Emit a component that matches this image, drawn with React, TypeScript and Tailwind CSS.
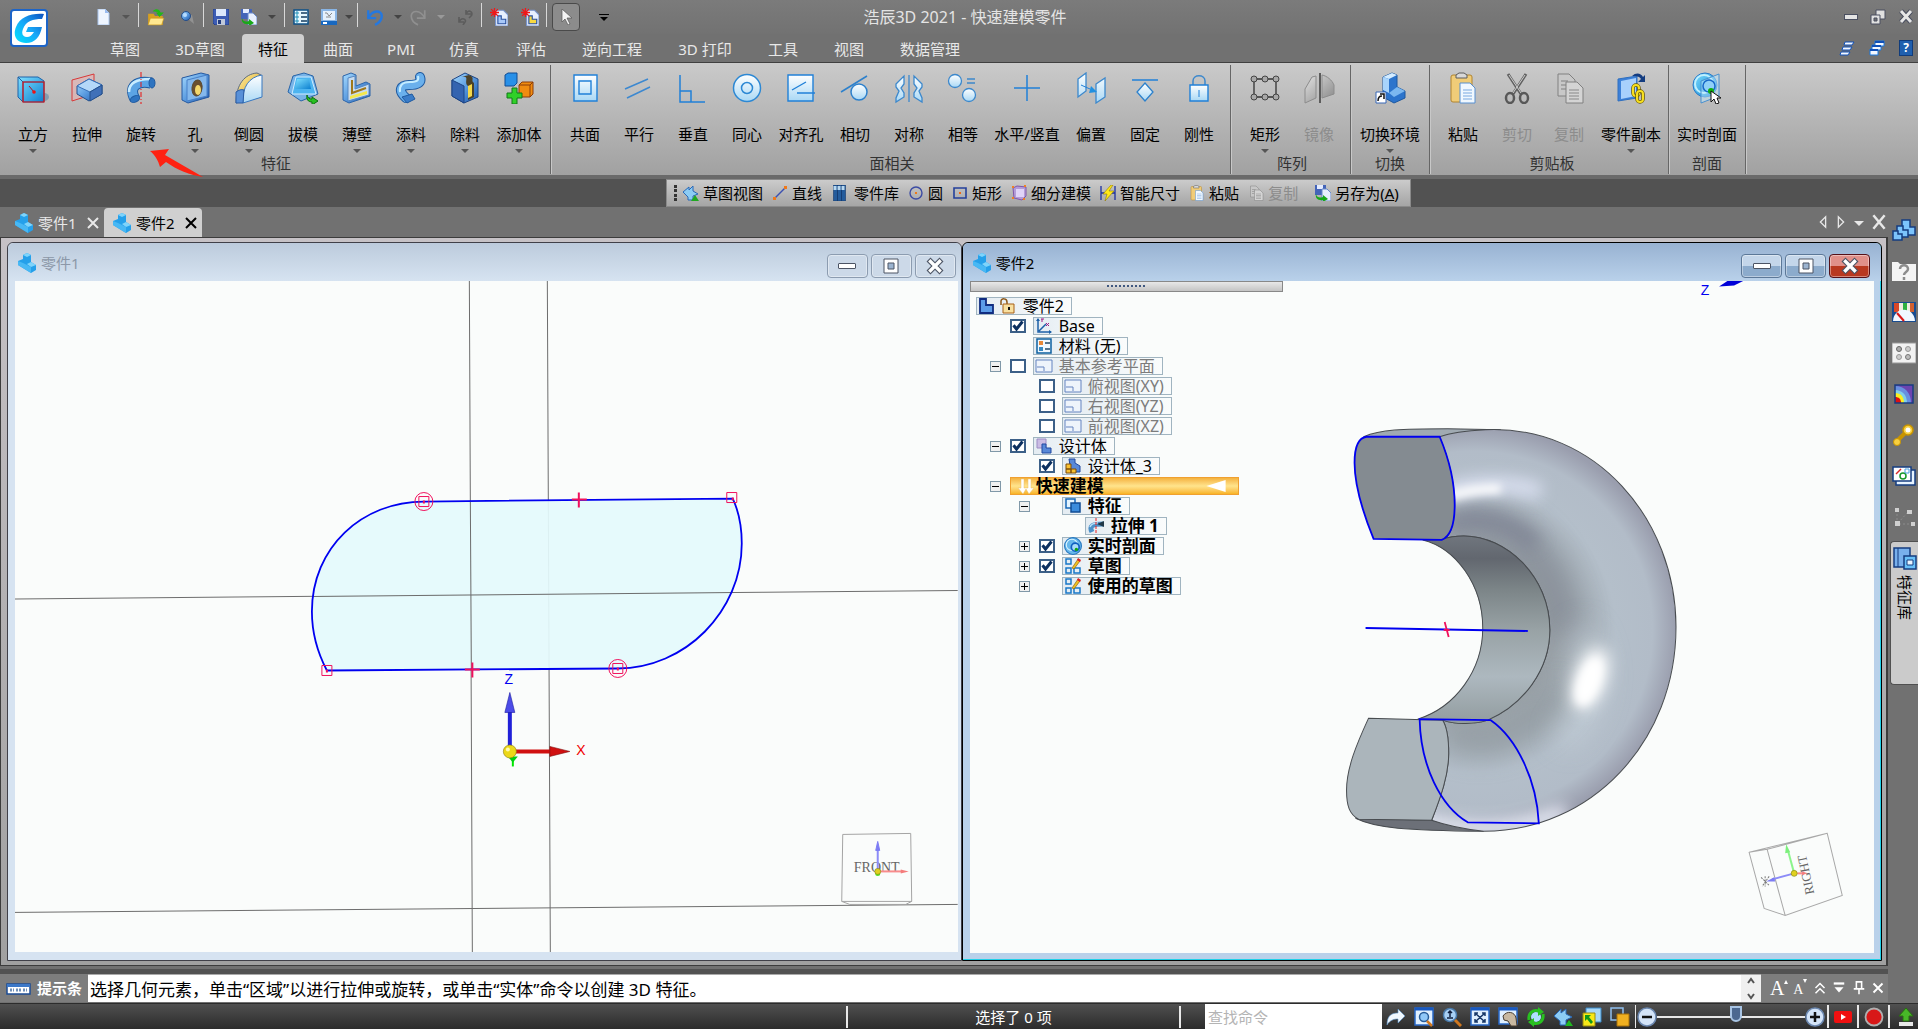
import { useState } from "react";
import type { ReactNode } from "react";

type IconProps = { className?: string; box?: number; children: ReactNode };

const Svg = ({ className = "w-4 h-4", box = 16, children }: IconProps) => (
    <svg className={`shrink-0 ${className}`} viewBox={`0 0 ${box} ${box}`} fill="none" aria-hidden="true">
        {children}
    </svg>
);

const Big = ({ children }: { children: ReactNode }) => (
    <Svg className="w-8 h-8" box={32}>{children}</Svg>
);

// Gradients shared by all icons
const Gradients = () => (
    <svg className="absolute w-0 h-0" aria-hidden="true">
        <defs>
            <linearGradient id="blue" x1="0" y1="0" x2="1" y2="1">
                <stop offset="0" stopColor="#a8dcff" />
                <stop offset="0.5" stopColor="#5a9be0" />
                <stop offset="1" stopColor="#1c54a8" />
            </linearGradient>
            <linearGradient id="cyan" x1="0" y1="0" x2="1" y2="1">
                <stop offset="0" stopColor="#7fe0ff" />
                <stop offset="1" stopColor="#0b7fd0" />
            </linearGradient>
            <linearGradient id="pale" x1="0" y1="0" x2="0" y2="1">
                <stop offset="0" stopColor="#ffffff" />
                <stop offset="1" stopColor="#a9d8f5" />
            </linearGradient>
            <linearGradient id="gold" x1="0" y1="0" x2="1" y2="1">
                <stop offset="0" stopColor="#fff3a8" />
                <stop offset="1" stopColor="#d99a10" />
            </linearGradient>
            <linearGradient id="gray" x1="0" y1="0" x2="1" y2="1">
                <stop offset="0" stopColor="#e2e2e2" />
                <stop offset="1" stopColor="#858585" />
            </linearGradient>
            <linearGradient id="logo" x1="0" y1="1" x2="1" y2="0">
                <stop offset="0" stopColor="#00e4ff" />
                <stop offset="0.5" stopColor="#18a8f8" />
                <stop offset="1" stopColor="#0c50c0" />
            </linearGradient>
        </defs>
    </svg>
);

/* ---------- ribbon icons ---------- */

const CubeIcon = () => (
    <Big>
        <ellipse cx="27" cy="25" rx="5" ry="4" fill="#6f8fa8" opacity="0.7" />
        <path d="M1 5h20l6 4v21H6l-5-5z" fill="url(#cyan)" stroke="#1e62a8" />
        <path d="M1 5l5 5h21M6 10v20" stroke="#1e62a8" />
        <path d="M6 10h21v20H6z" stroke="#e01010" strokeWidth="1.2" />
        <path d="M12 14l5 6" stroke="#b01020" />
        <circle cx="17" cy="20" r="1.8" fill="#f01010" />
    </Big>
);

const ExtrudeIcon = () => (
    <Big>
        <path d="M1 8l22-6v20L1 29z" fill="#e8b0b0" fillOpacity="0.6" stroke="#d83838" />
        <path d="M6 14l12-7 13 6v9l-13 7-12-7z" fill="url(#blue)" stroke="#24508c" />
        <path d="M6 14l13 6 12-7-13-6z" fill="#b4d8f8" stroke="#3870b8" />
        <path d="M19 20l12-7v9l-12 7z" fill="#4070b8" stroke="#24508c" />
    </Big>
);

const RevolveIcon = () => (
    <Big>
        <path d="M10 27C3 15 12 8 26 11" stroke="#1f5aa0" strokeWidth="11" />
        <path d="M10 27C3 15 12 8 26 11" stroke="#5ca4e4" strokeWidth="9" />
        <path d="M4 20C4 12 10 7 25 7" stroke="#c8ecff" strokeWidth="2.5" />
        <ellipse cx="10" cy="27" rx="5" ry="3" transform="rotate(-25 10 27)" fill="#2f74c0" stroke="#1f5aa0" />
        <ellipse cx="27" cy="11" rx="3" ry="5" fill="#2f74c0" stroke="#1f5aa0" />
        <path d="M16 0v32" stroke="#e81010" strokeDasharray="5 2 1 2" />
    </Big>
);

const HoleIcon = () => (
    <Big>
        <path d="M3 6l19-5 8 2v22L9 31l-6-3z" fill="url(#blue)" stroke="#2458a0" />
        <path d="M8 8l20-5v21L8 29z" fill="#84b8ec" stroke="#4880c8" />
        <ellipse cx="18" cy="16" rx="5" ry="8" transform="rotate(8 18 16)" fill="#6a5030" stroke="#5a4a30" />
        <ellipse cx="19" cy="18" rx="3" ry="5" fill="#f4d86c" />
    </Big>
);

const FilletIcon = () => (
    <Big>
        <path d="M3 31C3 12 12 2 24 1l4 2v22z" fill="url(#gold)" stroke="#5a6a80" />
        <path d="M10 31C9 15 16 5 29 3v22z" fill="url(#pale)" stroke="#3878c0" />
        <path d="M3 31V20c3-2 5-3 8-2l-1 13z" fill="#5890d8" stroke="#2a5ca4" />
    </Big>
);

const DraftIcon = () => (
    <Big>
        <path d="M6 4l11-3 9 3 5 18-17 7L1 20z" fill="#78b4e8" stroke="#2864a8" />
        <path d="M9 5h15l5 17H5z" fill="#4cb4f0" stroke="#d0ecff" />
        <path d="M10 7h12l2 10H8z" fill="url(#cyan)" />
        <path d="M20 23c1 3 2 4 5 4v-2l6 4-6 4v-3c-4 0-6-3-5-7z" fill="#28c020" stroke="#0a7010" />
    </Big>
);

const ShellIcon = () => (
    <Big>
        <path d="M2 4l8-3 5 2v11l10-4 4 2v12L8 31l-6-3z" fill="url(#blue)" stroke="#2c64a8" />
        <path d="M7 6l7-2v13l14-5v11L7 29z" fill="#c8dcf0" stroke="#5888c0" />
        <path d="M11 8v13l14-5" stroke="#a07818" strokeWidth="2" />
        <path d="M9 24l17-5v3L9 27z" fill="#f4e84c" />
    </Big>
);

const SweepIcon = () => (
    <Big>
        <path d="M11 26C2 18 6 13 14 13s13-2 11-8" stroke="#1f5aa0" strokeWidth="10" strokeLinecap="round" />
        <path d="M11 26C2 18 6 13 14 13s13-2 11-8" stroke="#6ab0ec" strokeWidth="8" strokeLinecap="round" />
        <path d="M5 20c-1-6 2-10 10-10s9-2 8-6" stroke="#c4ecff" strokeWidth="2" />
        <path d="M7 25l10-3 3 5-8 4z" fill="#3a7cc8" stroke="#1f5aa0" />
    </Big>
);

const CutIcon = () => (
    <Big>
        <path d="M3 8l13-7 13 6v18l-14 6L3 24z" fill="url(#blue)" stroke="#1c4484" />
        <path d="M3 8l12 6v17L3 24z" fill="#3464b0" stroke="#1c4484" />
        <path d="M12 5c10-2 2 5 7 9v14l6-3V11c-4-3 2-5-5-8z" fill="#4c4228" />
        <path d="M19 14l4-2v12l-4 2z" fill="#f4d84c" />
    </Big>
);

const AddBodyIcon = () => (
    <Big>
        <path d="M2 3l3-2h9v10l-3 3H2z" fill="#2890e8" stroke="#104c94" />
        <path d="M16 13l3-3h11v12l-3 3H16z" fill="#f08c10" stroke="#8c3c08" />
        <path d="M16 13h11v12M27 13l3-3" stroke="#8c3c08" />
        <path d="M9 16h5v5h5v5h-5v6H9v-6H4v-5h5z" fill="#30d028" stroke="#107818" />
    </Big>
);

const CoplanarIcon = () => (
    <Big>
        <path d="M5 3h23v26H5z" fill="url(#pale)" stroke="#2080d8" strokeWidth="1.4" />
        <path d="M10 9h12v13H10z" stroke="#2080d8" strokeWidth="1.4" />
    </Big>
);

const ParallelIcon = () => (
    <Big><path d="M2 17L25 7M4 26l23-11" stroke="#3c88d0" strokeWidth="1.5" /></Big>
);

const PerpIcon = () => (
    <Big><path d="M3 3v27h25M3 19h11v11" stroke="#2080d8" strokeWidth="1.5" /></Big>
);

const ConcentricIcon = () => (
    <Big>
        <circle cx="16" cy="16" r="13.5" fill="url(#pale)" stroke="#2c88d4" strokeWidth="1.5" />
        <circle cx="16" cy="16" r="5.5" stroke="#2c88d4" strokeWidth="1.5" />
    </Big>
);

const AlignHoleIcon = () => (
    <Big>
        <path d="M3 3h25v26H3z" fill="url(#pale)" stroke="#2080d8" strokeWidth="1.4" />
        <path d="M7 18l14-8M12 21h18" stroke="#2080d8" strokeWidth="1.4" />
    </Big>
);

const TangentIcon = () => (
    <Big>
        <path d="M2 20L28 4" stroke="#2c80cc" strokeWidth="1.5" />
        <circle cx="20" cy="20" r="8" fill="url(#pale)" stroke="#2c80cc" strokeWidth="1.5" />
    </Big>
);

const SymmetricIcon = () => (
    <Big>
        <path d="M3 12l8-8v8l-3 4 3 5v4l-8 5v-4l3-7-3-4zM29 12l-8-8v8l3 4-3 5v4l8 5v-4l-3-7 3-4z" fill="url(#pale)" stroke="#3c88cc" strokeWidth="1.3" />
        <path d="M16 3v27" stroke="#3c88cc" strokeWidth="1.3" />
    </Big>
);

const EqualIcon = () => (
    <Big>
        <circle cx="8" cy="9" r="6.5" fill="url(#pale)" stroke="#3c88cc" strokeWidth="1.3" />
        <circle cx="22" cy="23" r="6.5" fill="url(#pale)" stroke="#3c88cc" strokeWidth="1.3" />
        <path d="M20 7h8M20 11h8" stroke="#3c88cc" strokeWidth="1.3" />
    </Big>
);

const HorizVertIcon = () => (
    <Big><path d="M16 3v26M3 16h26" stroke="#2080d8" strokeWidth="1.5" /></Big>
);

const OffsetIcon = () => (
    <Big>
        <path d="M3 7l8-6v18l-8 6zM21 12l9-6v19l-9 6z" fill="url(#pale)" stroke="#3c88cc" strokeWidth="1.3" />
        <path d="M6 13l9 4" stroke="#2080d8" />
        <path d="M16 14l6 6-8 1z" fill="#2090e0" />
    </Big>
);

const FixIcon = () => (
    <Big>
        <path d="M3 8h26" stroke="#2080d8" strokeWidth="1.5" />
        <path d="M16 11l8 9-8 9-8-9z" fill="url(#pale)" stroke="#2c80cc" strokeWidth="1.3" />
    </Big>
);

const LockIcon = () => (
    <Big>
        <path d="M10 13V9c0-7 12-7 12 0v4" stroke="#3c88cc" strokeWidth="1.5" />
        <path d="M7 13h18v16H7z" fill="url(#pale)" stroke="#2080d8" strokeWidth="1.4" />
        <path d="M16 18v7" stroke="#2080d8" />
    </Big>
);

const PatternIcon = () => (
    <Big>
        <path d="M5 7h22v18H5z" stroke="#333" strokeWidth="1.3" />
        {[5, 16, 27].map((x) => [7, 25].map((y) => (
            <circle key={`${x}-${y}`} cx={x} cy={y} r="3" fill="#a8a8a8" stroke="#444" />
        )))}
    </Big>
);

const MirrorIcon = () => (
    <Big>
        <path d="M2 17L9 5l4-1v22L2 31zM19 3c5 1 10 5 12 10v9l-12 4z" fill="url(#gray)" stroke="#8c8c8c" />
        <path d="M17 1v30" stroke="#5c5c5c" strokeWidth="2" />
    </Big>
);

const SwitchEnvIcon = () => (
    <Big>
        <path d="M9 5l9-4 5 2v12l8 4v7l-11 5-11-6z" fill="#2c74cc" stroke="#1c58a0" />
        <path d="M9 5l9-4 5 2-8 4z" fill="#d4ecff" />
        <path d="M9 5l6 2v14l-6-3z" fill="#a8d4fc" />
        <path d="M15 21l8-6 8 4-11 6z" fill="#7cb8f0" />
        <path d="M2 20h10v11H2z" fill="#fff" stroke="#3868b8" />
        <path d="M4 29c0-4 2-5 4-5M6 22h4v5" stroke="#111" strokeWidth="1.5" />
    </Big>
);

const PasteIcon = ({ className = "w-8 h-8" }: { className?: string }) => (
    <Svg className={className} box={32}>
        <rect x="4" y="3" width="21" height="27" rx="2" fill="#f0cc78" stroke="#b08430" />
        <path d="M9 6V3l3-2h5l3 2v3z" fill="#d8d8d8" stroke="#5c5c5c" />
        <path d="M13 11h10l5 5v15H13z" fill="#f0f8ff" stroke="#5890d0" />
        <path d="M16 18h9M16 21h9M16 24h9M16 27h9" stroke="#78a8e0" />
    </Svg>
);

const ScissorsIcon = () => (
    <Big>
        <path d="M7 2l13 20M25 2L12 22" stroke="#606060" strokeWidth="3" />
        <path d="M8 3l12 18M24 3L12 21" stroke="#d0d0d0" />
        <ellipse cx="9" cy="26" rx="4" ry="5" stroke="#585858" strokeWidth="2.5" />
        <ellipse cx="23" cy="26" rx="4" ry="5" stroke="#585858" strokeWidth="2.5" />
    </Big>
);

const CopyIcon = ({ className = "w-8 h-8" }: { className?: string }) => (
    <Svg className={className} box={32}>
        <path d="M5 2h11l6 6v16H5z" fill="#c8c8c8" stroke="#808080" />
        <path d="M8 9h7M8 13h7M8 17h5" stroke="#808080" />
        <path d="M13 10h11l6 6v15H13z" fill="#d4d4d4" stroke="#808080" />
        <path d="M16 18h10M16 21h10M16 24h10M16 27h10" stroke="#888" />
    </Svg>
);

const PartCopyIcon = () => (
    <Big>
        <path d="M3 7l19-3v22L3 29z" fill="#3c80d8" stroke="#3070c0" />
        <path d="M6 9l15-3v18L6 27z" fill="#a8d0fc" />
        <path d="M17 4c4-4 9-3 11 1l2-2v7h-7l3-3c-2-3-5-3-9-3z" fill="#143c80" />
        <rect x="18" y="13" width="6" height="11" rx="3" stroke="#685800" strokeWidth="3.5" />
        <rect x="18" y="13" width="6" height="11" rx="3" stroke="#f8e020" strokeWidth="2" />
        <rect x="22" y="19" width="6" height="11" rx="3" stroke="#685800" strokeWidth="3.5" />
        <rect x="22" y="19" width="6" height="11" rx="3" stroke="#f8e020" strokeWidth="2" />
    </Big>
);

const SectionIcon = () => (
    <Big>
        <circle cx="14" cy="13" r="12" fill="url(#cyan)" stroke="#2878c8" />
        <circle cx="13" cy="12" r="9" stroke="#c0f0ff" strokeWidth="2" />
        <path d="M10 9l18-7v22l-18 7z" fill="#c0e8fc" fillOpacity="0.5" stroke="#4890d0" />
        <circle cx="18" cy="14" r="6" fill="#90d0f8" stroke="#1868c8" strokeWidth="1.5" />
        <circle cx="20" cy="19" r="3" fill="#10b010" />
        <path d="M20 19v11l3-3 2 5 3-1-2-5h4z" fill="#fff" stroke="#111" />
    </Big>
);

/* ---------- small icons ---------- */

const PartIcon = () => (
    <Svg className="w-5 h-5" box={20}>
        <path d="M1 8l5-2V2l4-2 4 2v7l5 3v5l-5 3L1 12z" fill="#25a0ea" />
        <path d="M6 2l4-2 4 2-4 2zM14 9l5 3-5 2-4-3z" fill="#7fd4fb" />
        <path d="M1 8l5 2 8 4v6L1 12z" fill="#48b8f4" />
    </Svg>
);

const DocIcon = () => <Svg><path d="M3 0h7l4 4v12H3z" fill="#eef5ff" stroke="#a8c4ec" /><path d="M10 0v4h4" fill="#9abcf0" /></Svg>;
const OpenIcon = () => <Svg className="w-[18px] h-[18px]"><path d="M1 5h5l1 2h7v8H1z" fill="#d8a020" /><path d="M3 9h12l-2 6H1z" fill="#ffe890" stroke="#c89820" strokeWidth="0.6" /><path d="M5 3c3-3 6-2 7 1h3l-4 4-3-4h2C9 3 7 3 5 3z" fill="#20b818" /></Svg>;
const PinViewIcon = () => <Svg><path d="M7 8l8 7-2-9z" fill="#9a9a9a" opacity="0.8" /><circle cx="7" cy="7" r="4.5" fill="url(#blue)" stroke="#244c88" /><circle cx="6" cy="6" r="2" fill="#b8dcff" /></Svg>;
const SaveIcon = () => <Svg><path d="M0 0h16v16H2l-2-2z" fill="#3c5cb4" stroke="#24408c" /><path d="M3 0h10v7H3z" fill="#dce8fc" /><path d="M4 10h8v6H4z" fill="#c0c8d8" /><path d="M5 11h3v4H5z" fill="#223c80" /></Svg>;
const SaveAsIcon = () => <Svg><path d="M0 0h11v10H0z" fill="#4464b8" /><path d="M2 0h6v4H2z" fill="#e4ecff" /><path d="M7 4h5l4 4v8H7z" fill="#e8f0ff" stroke="#6888c8" /><path d="M1 9c1 4 4 4 7 3v-2l5 4-5 3v-2c-5 1-8-2-7-6z" fill="#18a818" /></Svg>;
const ListIcon = () => <Svg><path d="M1 1h14v14H1z" fill="#e8f8ff" stroke="#0c5088" strokeWidth="1.5" /><path d="M3 3h2v2H3zM3 7h2v2H3zM3 11h2v2H3z" stroke="#2090b8" /><path d="M8 4h6M8 8h6M8 12h6" stroke="#143c60" strokeWidth="1.5" /></Svg>;
const ImageSaveIcon = () => <Svg><path d="M1 1h14v11H1z" fill="#e4f0fc" stroke="#88b4e4" strokeWidth="2" /><path d="M4 4h2l2 3 3-3M5 8h5" stroke="#888" /><path d="M0 12h16v4H0z" fill="#1868c0" /><path d="M2 13h4v2H2z" fill="#fff" /></Svg>;
const UndoIcon = () => <Svg className="w-[18px] h-[18px]"><path d="M2 2v7h7" stroke="#2478e0" strokeWidth="2" /><path d="M2 9c4-8 12-7 12-2 0 3-2 6-6 8" stroke="#2478e0" strokeWidth="2.2" /></Svg>;
const RedoIcon = () => <Svg className="w-[18px] h-[18px]"><path d="M14 2v7H7" stroke="#909090" strokeWidth="1.5" /><path d="M14 9C10 1 2 2 2 7c0 3 2 6 6 8" stroke="#909090" strokeWidth="1.5" /></Svg>;
const RepeatIcon = () => <Svg><path d="M8 1v4h5M8 5c3-6 8-1 5 2l-2 2M1 8v5h5M1 13c3-6 8-2 6 0l-2 3" stroke="#5c5c5c" strokeWidth="1.6" /></Svg>;
const NewPartIcon = ({ color }: { color: string }) => <Svg className="w-[18px] h-[18px]"><path d="M5 2h7l4 4v10H5z" fill="#e8f0ff" stroke="#7894cc" /><path d="M7 7h3v3h4v4H7z" fill={color} stroke="#2850a0" /><path d="M4 0v8M0 4h8M1 1l6 6M7 1L1 7" stroke="#f01818" strokeWidth="1.2" /></Svg>;
const CursorIcon = () => <Svg><path d="M4 0v13l3-3 3 6 2-1-3-6h5z" fill="#f4f4f4" stroke="#555" strokeWidth="0.7" /></Svg>;
const SketchViewIcon = () => <Svg><path d="M0 7l6-5v3l4-4v5l5 3-5 2v4H5v-3z" fill="#8cccf4" stroke="#2868b8" /><path d="M12 10l4 6H8z" fill="#20a820" /></Svg>;
const LineIcon = () => <Svg><path d="M3 13L13 3" stroke="#3c50b0" strokeWidth="1.5" /><path d="M1 12h3v3H1zM12 1h3v3h-3z" fill="#f07818" /></Svg>;
const LibraryIcon = () => <Svg className="w-[19px] h-4"><path d="M1 0h4v16H1zM5 0h4v16H5zM9 0h4v16H9z" fill="#245c9c" stroke="#12386c" strokeWidth="0.6" /><path d="M1 1h3v4H1zM5 1h3v4H5zM9 1h3v4H9z" fill="#b8d8f0" /></Svg>;
const CircleIcon = () => <Svg><circle cx="8" cy="8" r="6" stroke="#3c4ca4" strokeWidth="1.4" /><path d="M7 7h2v2H7z" fill="#f07818" /></Svg>;
const RectIcon = () => <Svg><path d="M2 3h12v10H2z" stroke="#24409c" strokeWidth="1.6" /><path d="M7 7h2v2H7z" fill="#f06818" /></Svg>;
const SubdivIcon = () => <Svg><path d="M2 3l4-2 9 1v9l-4 4-8-2z" fill="#b49cd8" stroke="#8058a8" /><path d="M5 4h8v8H5z" fill="#e0d4f8" /><path d="M1 1h2v2H1zM13 0h2v2h-2zM1 12h2v2H1zM12 13h2v2h-2z" fill="#f08020" /></Svg>;
const SmartDimIcon = () => <Svg><path d="M1 1v14M15 1v14M1 8h14" stroke="#1c30a0" strokeWidth="1.3" /><path d="M11 0L3 9h4l-2 7 9-10H9l4-6z" fill="#ffe818" stroke="#907800" strokeWidth="0.6" /></Svg>;

/* ---------- data ---------- */

const tabs = [
    { name: "草图", width: "w-[66px]" },
    { name: "3D草图", width: "w-[84px]" },
    { name: "特征", width: "w-[62px]" },
    { name: "曲面", width: "w-[68px]" },
    { name: "PMI", width: "w-[58px]" },
    { name: "仿真", width: "w-[68px]" },
    { name: "评估", width: "w-[66px]" },
    { name: "逆向工程", width: "w-[96px]" },
    { name: "3D 打印", width: "w-[90px]" },
    { name: "工具", width: "w-[66px]" },
    { name: "视图", width: "w-[66px]" },
    { name: "数据管理", width: "w-[96px]" },
];

type Command = { label: string; icon: ReactNode; menu?: boolean; disabled?: boolean; width?: string };
type Group = { title: string; pad: string; commands: Command[] };

const groups: Group[] = [
    {
        title: "特征",
        pad: "pl-[6px] pr-1",
        commands: [
            { label: "立方", icon: <CubeIcon />, menu: true },
            { label: "拉伸", icon: <ExtrudeIcon /> },
            { label: "旋转", icon: <RevolveIcon /> },
            { label: "孔", icon: <HoleIcon />, menu: true },
            { label: "倒圆", icon: <FilletIcon />, menu: true },
            { label: "拔模", icon: <DraftIcon /> },
            { label: "薄壁", icon: <ShellIcon />, menu: true },
            { label: "添料", icon: <SweepIcon />, menu: true },
            { label: "除料", icon: <CutIcon />, menu: true },
            { label: "添加体", icon: <AddBodyIcon />, menu: true },
        ],
    },
    {
        title: "面相关",
        pad: "pl-[7px] pr-1",
        commands: [
            { label: "共面", icon: <CoplanarIcon /> },
            { label: "平行", icon: <ParallelIcon /> },
            { label: "垂直", icon: <PerpIcon /> },
            { label: "同心", icon: <ConcentricIcon /> },
            { label: "对齐孔", icon: <AlignHoleIcon /> },
            { label: "相切", icon: <TangentIcon /> },
            { label: "对称", icon: <SymmetricIcon /> },
            { label: "相等", icon: <EqualIcon /> },
            { label: "水平/竖直", icon: <HorizVertIcon />, width: "w-[74px]" },
            { label: "偏置", icon: <OffsetIcon /> },
            { label: "固定", icon: <FixIcon /> },
            { label: "刚性", icon: <LockIcon /> },
        ],
    },
    {
        title: "阵列",
        pad: "pl-[7px] pr-1",
        commands: [
            { label: "矩形", icon: <PatternIcon />, menu: true },
            { label: "镜像", icon: <MirrorIcon />, disabled: true },
        ],
    },
    { title: "切换", pad: "px-[2px]", commands: [{ label: "切换环境", icon: <SwitchEnvIcon />, menu: true, width: "w-[74px]" }] },
    {
        title: "剪贴板",
        pad: "pl-[6px]",
        commands: [
            { label: "粘贴", icon: <PasteIcon /> },
            { label: "剪切", icon: <ScissorsIcon />, disabled: true },
            { label: "复制", icon: <CopyIcon />, disabled: true, width: "w-[50px]" },
            { label: "零件副本", icon: <PartCopyIcon />, menu: true, width: "w-[74px]" },
        ],
    },
    { title: "剖面", pad: "px-px", commands: [{ label: "实时剖面", icon: <SectionIcon />, width: "w-[74px]" }] },
];

const quickCommands = [
    { label: "草图视图", icon: <SketchViewIcon /> },
    { label: "直线", icon: <LineIcon /> },
    { label: "零件库", icon: <LibraryIcon /> },
    { label: "圆", icon: <CircleIcon /> },
    { label: "矩形", icon: <RectIcon /> },
    { label: "细分建模", icon: <SubdivIcon /> },
    { label: "智能尺寸", icon: <SmartDimIcon /> },
    { label: "粘贴", icon: <PasteIcon className="w-4 h-4" /> },
    { label: "复制", icon: <CopyIcon className="w-4 h-4" />, disabled: true },
];

/* ---------- header ---------- */

const Caret = ({ className = "border-t-[#333]" }: { className?: string }) => (
    <span className={`inline-block w-0 h-0 border-x-4 border-x-transparent border-t-4 ${className}`} />
);

const QatButton = ({ label, width, children }: { label: string; width: string; children: ReactNode }) => (
    <button aria-label={label} className={`h-7 flex items-center justify-center ${width}`}>{children}</button>
);

const QatSep = () => <span className="w-px h-6 bg-[#d8d8d8] mx-px self-start mt-[3px]" />;

function TitleBar() {
    return (
        <div className="relative h-[34px] flex items-center pl-[91px] bg-gradient-to-b from-[#7b7b7b] to-[#727272]">
            <QatButton label="新建" width="w-6"><DocIcon /></QatButton>
            <QatButton label="新建选项" width="w-[22px]"><Caret className="border-t-[#555]" /></QatButton>
            <QatSep />
            <QatButton label="打开" width="w-[31px]"><OpenIcon /></QatButton>
            <QatButton label="预览" width="w-[31px]"><PinViewIcon /></QatButton>
            <QatSep />
            <QatButton label="保存" width="w-8"><SaveIcon /></QatButton>
            <QatButton label="另存为" width="w-6"><SaveAsIcon /></QatButton>
            <QatButton label="保存选项" width="w-[22px]"><Caret className="border-t-[#444]" /></QatButton>
            <QatSep />
            <QatButton label="属性" width="w-[30px]"><ListIcon /></QatButton>
            <QatButton label="图像" width="w-[26px]"><ImageSaveIcon /></QatButton>
            <QatButton label="图像选项" width="w-[14px]"><Caret className="border-t-[#444]" /></QatButton>
            <QatSep />
            <QatButton label="撤销" width="w-[31px]"><UndoIcon /></QatButton>
            <QatButton label="撤销选项" width="w-4"><Caret className="border-t-[#444]" /></QatButton>
            <QatButton label="重做" width="w-6"><RedoIcon /></QatButton>
            <QatButton label="重做选项" width="w-[22px]"><Caret className="border-t-[#999]" /></QatButton>
            <QatButton label="重复" width="w-7"><RepeatIcon /></QatButton>
            <QatSep />
            <QatButton label="新建零件" width="w-[31px]"><NewPartIcon color="#a8c8f8" /></QatButton>
            <QatButton label="新建装配" width="w-[31px]"><NewPartIcon color="#f8d840" /></QatButton>
            <QatSep />
            <button aria-label="选择" className="w-[28px] h-[28px] ml-1 flex items-center justify-center rounded-sm border border-[#4a4a4a] bg-[#8c8c8c]">
                <CursorIcon />
            </button>
            <button aria-label="自定义" className="ml-[18px] w-3 flex flex-col items-center gap-[2px]">
                <span className="w-[10px] h-px bg-black" />
                <Caret className="border-t-black" />
            </button>
            <h1 className="absolute inset-x-0 left-3 text-center text-base leading-[34px] text-[#e4e4e4] pointer-events-none">
                浩辰3D 2021 - 快速建模零件
            </h1>
            <div className="ml-auto flex items-center gap-3 pr-1">
                <button aria-label="最小化" className="w-[14px] h-4 flex items-center"><span className="w-[14px] h-[6px] bg-[#e4e4e4] border border-[#4a4f60]" /></button>
                <button aria-label="还原">
                    <Svg><path d="M6 1h9v9H6z" fill="#e0e0e0" stroke="#4a4f60" /><path d="M1 6h9v9H1z" fill="#e0e0e0" stroke="#4a4f60" /><path d="M4 9h3v3H4z" fill="#727272" stroke="#4a4f60" /></Svg>
                </button>
                <button aria-label="关闭">
                    <Svg><path d="M3 2l10 11M13 2L3 13" stroke="#4a4f60" strokeWidth="5" /><path d="M3 2l10 11M13 2L3 13" stroke="#e6e6e6" strokeWidth="3" /></Svg>
                </button>
            </div>
        </div>
    );
}

function TabBar() {
    const [active, setActive] = useState("特征");
    return (
        <nav className="h-7 flex pl-[92px] bg-[#717171]">
            {tabs.map((t) => (
                <button
                    key={t.name}
                    onClick={() => setActive(t.name)}
                    className={`h-[29px] text-[15px] leading-7 whitespace-nowrap ${t.width} ${active === t.name ? "relative z-10 rounded-t bg-[#cfcfcf] text-black" : "text-[#e8e8e8]"}`}
                >
                    {t.name}
                </button>
            ))}
            <div className="ml-auto flex items-center gap-[14px] pr-[5px]">
                <button aria-label="层叠">
                    <Svg><path d="M6 2h9l-2 3H5zM4 7h9l-2 3H3zM2 12h9l-2 3H1z" fill="#f4f8ff" stroke="#1050b8" /></Svg>
                </button>
                <button aria-label="平铺">
                    <Svg><path d="M6 1h9v5h-3v4h-3v5H1V9h2V5h3z" fill="#f4f8ff" stroke="#1878e0" /><path d="M6 2h9M3 6h9M1 10h8" stroke="#1050b8" strokeWidth="2" /></Svg>
                </button>
                <button aria-label="帮助" className="w-[14px] h-4 bg-[#1f5fae] border border-[#103c7c] text-white text-xs leading-[14px] font-bold">?</button>
            </div>
        </nav>
    );
}

function RibbonCommand({ label, icon, menu, disabled, width = "w-[54px]" }: Command) {
    return (
        <button
            disabled={disabled}
            className={`h-[92px] pt-[9px] flex flex-col items-center ${width} ${disabled ? "text-[#8c8c8c]" : "text-black"}`}
        >
            {icon}
            <span className="mt-5 text-[15px] leading-5 whitespace-nowrap">{label}</span>
            {menu && <Caret className="mt-[5px] border-t-[#555]" />}
        </button>
    );
}

function Ribbon() {
    return (
        <div className="relative h-[117px] flex border-t border-[#404040] border-b-4 border-b-[#6a6a6a] bg-gradient-to-b from-[#cacaca] to-[#a1a1a1]">
            {groups.map((g) => (
                <section key={g.title} aria-label={g.title} className={`h-[109px] mt-[2px] border-r border-[#666] shadow-[1px_0_0_#c8c8c8] ${g.pad}`}>
                    <div className="-mt-[2px] flex">
                        {g.commands.map((c) => <RibbonCommand key={c.label} {...c} />)}
                    </div>
                    <p className="text-center text-[15px] leading-4 text-[#333]">{g.title}</p>
                </section>
            ))}
            {/* Pointer towards the revolve command */}
            <svg className="absolute left-[148px] top-[84px] w-14 h-8 pointer-events-none" viewBox="0 0 56 32">
                <path d="M2 4l19-2-4 6 38 22c-13-2-26-7-37-15l-6 5c-2-7-5-12-10-16z" fill="#ff2212" />
            </svg>
        </div>
    );
}

function QuickBar() {
    return (
        <div className="h-[28px] flex bg-[#525252] pl-[666px]">
            <div role="toolbar" className="h-[28px] flex items-center pl-[7px] pr-[11px] gap-[9px] border border-[#8a8a8a] bg-gradient-to-b from-[#cbcbcb] to-[#a5a5a5] text-[15px] leading-5 whitespace-nowrap">
                <span className="w-[3px] h-4 -mr-[3px] flex flex-col justify-between">
                    {[0, 1, 2, 3].map((i) => <span key={i} className="w-[3px] h-[3px] bg-[#333]" />)}
                </span>
                {quickCommands.map((c) => (
                    <button key={c.label} disabled={c.disabled} className={`flex items-center gap-1 ${c.disabled ? "text-[#8c8c8c]" : "text-black"}`}>
                        {c.icon}
                        {c.label}
                    </button>
                ))}
                <button className="ml-2 flex items-center gap-1">
                    <SaveAsIcon />
                    <span>另存为(<u>A</u>)</span>
                </button>
            </div>
        </div>
    );
}

function DocTabs() {
    const [active, setActive] = useState("零件2");
    return (
        <div className="h-[30px] flex items-end pl-[6px] bg-[#717171]">
            {["零件1", "零件2"].map((name) => {
                const on = active === name;
                return (
                    <div key={name} className={`h-[29px] w-[98px] pl-2 flex items-center rounded-t ${on ? "bg-[#d0d0d0] text-black" : "text-[#e8e8e8]"}`}>
                        <button onClick={() => setActive(name)} className="flex items-center gap-1 text-[15px] leading-5">
                            <PartIcon />
                            {name}
                        </button>
                        <button aria-label={`关闭 ${name}`} className="ml-2">
                            <Svg className="w-4 h-4"><path d="M3 3l10 10M13 3L3 13" stroke="currentColor" strokeWidth="2" /></Svg>
                        </button>
                    </div>
                );
            })}
            <div className="ml-auto h-full flex items-center gap-1 text-[#e8e8e8]">
                <button aria-label="上一个"><Svg className="w-[14px] h-[14px]"><path d="M11 2v12L5 8z" stroke="currentColor" strokeWidth="1.5" /></Svg></button>
                <button aria-label="下一个"><Svg className="w-[14px] h-[14px]"><path d="M5 2v12l6-6z" stroke="currentColor" strokeWidth="1.5" /></Svg></button>
                <button aria-label="窗口列表" className="w-[14px]"><Caret className="border-t-[#e8e8e8] border-x-[5px]! border-t-[5px]! align-middle" /></button>
                <button aria-label="关闭窗口"><Svg className="w-[18px] h-[18px]"><path d="M3 2l10 12M13 2L3 14" stroke="currentColor" strokeWidth="2.2" /></Svg></button>
            </div>
        </div>
    );
}

/* ---------- drawing windows ---------- */

function WindowButtons({ active }: { active?: boolean }) {
    const tone = active ? "border-[#5c7898] bg-gradient-to-b from-[#c4d6ea] from-50% to-[#8cabcc] to-50%" : "border-[#8c9cb0] bg-[#ccd9e8]";
    const close = active ? "border-[#551018] bg-gradient-to-b from-[#e0908a] from-50% to-[#b83820] to-50%" : "border-[#8c9cb0] bg-[#ccd9e8]";
    return (
        <div className="ml-auto flex gap-[3px] self-end mb-[3px]">
            <button aria-label="最小化" className={`w-[41px] h-6 flex items-center justify-center rounded-sm border shadow-[inset_0_0_0_1px_#ffffff66] ${tone}`}>
                <span className="w-[18px] h-[6px] rounded-[1px] bg-white border border-[#4c5464]" />
            </button>
            <button aria-label="最大化" className={`w-[41px] h-6 flex items-center justify-center rounded-sm border shadow-[inset_0_0_0_1px_#ffffff66] ${tone}`}>
                <Svg><path d="M1 1h14v14H1z" fill="#fff" stroke="#4c5464" /><path d="M5 5h6v6H5z" fill="#9cb4d0" stroke="#4c5464" /></Svg>
            </button>
            <button aria-label="关闭" className={`w-[41px] h-6 flex items-center justify-center rounded-sm border shadow-[inset_0_0_0_1px_#ffffff66] ${close}`}>
                <Svg className="w-[18px] h-[18px]"><path d="M4 4l8 8M12 4L4 12" stroke="#4c5464" strokeWidth="5" strokeLinecap="square" /><path d="M4 4l8 8M12 4L4 12" stroke="#fff" strokeWidth="3" strokeLinecap="square" /></Svg>
            </button>
        </div>
    );
}

const PROFILE = "M424 502C362 502 312 548 312 612C312 634 317 652 327 671L618 669C685 669 742 612 742 544C742 528 739 512 733 499Z";

const SketchDrawing = () => (
    <svg className="absolute inset-0 w-full h-full" viewBox="15 281 943 672" preserveAspectRatio="xMidYMid slice" fill="none">
        <path d="M469.500 281l3 672M547.500 281l3 672M15 599.500l943-8.500M15 913l943-8" stroke="#6c6c6c" />
        <path d={PROFILE} fill="#e4fafc" fillOpacity="0.93" />
        <path d="M470.500 502l1 168M312 597l423-4" stroke="#6c6c6c" />
        <path d={PROFILE} stroke="#0000f0" strokeWidth="1.8" />
        <g stroke="#f0105c">
            <path d="M419 497h10v10h-10zM727 493h10v10h-10zM322 666h10v10h-10zM613 664h10v10h-10z" />
            <circle cx="424" cy="502" r="9" />
            <circle cx="618" cy="669" r="9" />
            <path d="M579 493v15M572 500h15M472.500 663v15M465 670h15" strokeWidth="2" />
        </g>
        <path d="M423 501h2v3h-2zM732 498h2v3h-2zM326 670h2v3h-2zM617 668h2v3h-2z" fill="#f0105c" />

        {/* Origin triad */}
        <path d="M513 757v10" stroke="#00e800" strokeWidth="2" />
        <path d="M508 757l5 6 5-6z" fill="#00d010" />
        <path d="M510 747v-36" stroke="#2020d8" strokeWidth="4" />
        <path d="M510 693l5 20h-10z" fill="#4c4ce8" stroke="#1818a0" strokeWidth="0.6" />
        <path d="M515 752h37" stroke="#d01010" strokeWidth="4" />
        <path d="M570 752l-20 5v-10z" fill="#d01010" stroke="#801010" strokeWidth="0.6" />
        <circle cx="510" cy="752" r="6.5" fill="#ecd818" stroke="#8c7c10" strokeWidth="0.6" />
        <circle cx="508" cy="750" r="2" fill="#fffbb0" />
        <text x="509" y="685" textAnchor="middle" fontFamily="Liberation Sans" fontSize="14" fill="#0000f0">Z</text>
        <text x="581" y="756" textAnchor="middle" fontFamily="Liberation Sans" fontSize="14" fill="#f00000">X</text>

        {/* View cube */}
        <path d="M843 835l68-1 1 68-6 3h-56l-8-3zM842 902h70" stroke="#a4a4a4" />
        <text x="877" y="873" textAnchor="middle" fontFamily="Liberation Serif" fontSize="14" fill="#666">FRONT</text>
        <path d="M878 871v-22" stroke="#8c8cf8" strokeWidth="2" />
        <path d="M878 842l2 9h-4z" fill="#7c7cf4" stroke="#7c7cf4" />
        <path d="M880 872h22" stroke="#f88c8c" strokeWidth="2" />
        <path d="M909 872l-8 2v-4z" fill="#f47c7c" />
        <circle cx="878" cy="874" r="2.5" fill="#50e820" />
        <circle cx="878" cy="872" r="3" fill="#e0d020" stroke="#7c8010" strokeWidth="0.6" />
    </svg>
);

const BODY = "M1439 437C1450 433 1465 431 1485 430C1595 425 1675 520 1675 627C1675 742 1590 831 1483 831C1465 829 1448 826 1431 820C1440 796 1448 775 1448 753C1448 738 1447 728 1442 720C1455 725 1475 724 1487 720C1522 705 1549 670 1549 630C1549 576 1505 536 1463 536C1455 536 1448 537 1443 539C1451 536 1454 520 1454 500C1453 480 1447 456 1439 437Z";
const BORE = "M1422 540C1430 540 1437 540 1443 539C1448 537 1455 536 1463 536C1505 536 1549 576 1549 630C1549 670 1522 705 1487 720C1475 724 1455 725 1442 720L1417 719C1455 707 1482 670 1482 628C1482 585 1455 548 1422 540Z";

const SolidDrawing = () => (
    <svg className="absolute inset-0 w-full h-full" viewBox="970 281 903 672" preserveAspectRatio="xMidYMid slice" fill="none">
        <defs>
            <radialGradient id="ring" gradientUnits="userSpaceOnUse" cx="1473" cy="630" r="203">
                <stop offset="0.4" stopColor="#9aa2a8" />
                <stop offset="0.55" stopColor="#a6b0b8" />
                <stop offset="0.7" stopColor="#b4bfca" />
                <stop offset="0.88" stopColor="#b2bcc8" />
                <stop offset="1" stopColor="#9a9eae" />
            </radialGradient>
            <linearGradient id="bore" x1="0" y1="0" x2="0" y2="1">
                <stop offset="0" stopColor="#70767e" />
                <stop offset="0.12" stopColor="#62676f" />
                <stop offset="0.28" stopColor="#7b8487" />
                <stop offset="0.5" stopColor="#98a2a5" />
                <stop offset="0.75" stopColor="#adb8bf" />
                <stop offset="1" stopColor="#929c9f" />
            </linearGradient>
            <filter id="soft4" filterUnits="userSpaceOnUse" x="1340" y="400" width="380" height="460"><feGaussianBlur stdDeviation="4" /></filter>
            <filter id="soft8" filterUnits="userSpaceOnUse" x="1340" y="400" width="380" height="460"><feGaussianBlur stdDeviation="8" /></filter>
            <filter id="soft14" filterUnits="userSpaceOnUse" x="1340" y="400" width="380" height="460"><feGaussianBlur stdDeviation="14" /></filter>
            <clipPath id="bodyClip"><path d={BODY} /></clipPath>
        </defs>

        {/* Top and bottom rims */}
        <path d="M1363 437C1380 430 1400 429 1447 429L1500 430L1439 438z" fill="#a0aab2" stroke="#484c50" />
        <path d="M1355 818C1375 828 1405 830 1483 831L1431 820z" fill="#6c7078" stroke="#484c50" />

        <g clipPath="url(#bodyClip)">
            <path d={BODY} fill="url(#ring)" />
            <path d="M1445 530C1485 505 1560 540 1565 640" stroke="#767c88" strokeWidth="34" opacity="0.5" filter="url(#soft14)" />
            <path d="M1445 524C1480 512 1515 522 1535 545" stroke="#74788c" strokeWidth="18" opacity="0.5" filter="url(#soft8)" />
            <path d="M1430 498C1460 484 1500 480 1540 492" stroke="#e8ecfe" strokeWidth="16" opacity="0.75" filter="url(#soft8)" />
            <path d="M1440 499C1460 492 1480 489 1500 489" stroke="#ffffff" strokeWidth="9" filter="url(#soft4)" />
            <path d="M1446 732C1480 756 1530 735 1565 690" stroke="#828a90" strokeWidth="26" opacity="0.5" filter="url(#soft14)" />
            <path d="M1575 630C1600 660 1595 710 1560 740" stroke="#d0dce4" strokeWidth="24" opacity="0.5" filter="url(#soft14)" />
            <ellipse cx="1589" cy="679" rx="15" ry="32" transform="rotate(20 1589 679)" fill="#ffffff" filter="url(#soft8)" />
            <ellipse cx="1588" cy="682" rx="10" ry="24" transform="rotate(20 1588 682)" fill="#ffffff" filter="url(#soft4)" />
            <path d="M1415 818C1460 832 1510 834 1565 812" stroke="#f2f5ff" strokeWidth="16" opacity="0.9" filter="url(#soft8)" />
        </g>
        <path d={BODY} stroke="#484c50" />
        <path d={BORE} fill="url(#bore)" stroke="#484c50" />

        {/* Section faces */}
        <path d="M1368 718L1442 720C1447 728 1448 738 1448 753C1448 775 1440 797 1431 820L1358 819C1349 814 1346 806 1346 790C1346 768 1356 744 1368 718z" fill="#abb5bb" stroke="#484c50" />
        <path d="M1366 437L1439 437C1447 456 1454 480 1454 505C1454 522 1451 536 1441 540L1373 539C1362 512 1354 486 1354 463C1354 448 1358 438 1366 437z" fill="#848b91" stroke="#0000f0" strokeWidth="1.8" />
        <path d="M1419 719L1490 720C1516 738 1536 780 1538 823L1467 822C1440 806 1420 766 1419 719z" stroke="#0000f0" strokeWidth="1.8" />
        <path d="M1365 628L1527 631" stroke="#0000f0" strokeWidth="1.8" />
        <path d="M1444 622l4 15M1443 630h6" stroke="#f0105c" strokeWidth="1.8" />

        {/* Axis marker cut by the top edge */}
        <text x="1704" y="295" textAnchor="middle" fontFamily="Liberation Sans" fontSize="14" fill="#0000f0">Z</text>
        <path d="M1718 287l9-6h16l-10 5z" fill="#0000d8" />

        {/* View cube */}
        <path d="M1748 852l18-3 60-16 15 62-57 20-21-7zM1766 849l18 66M1748 852l78-19" stroke="#a8a8a8" />
        <text transform="translate(1813 893) rotate(-102)" fontFamily="Liberation Serif" fontSize="13" fill="#666">RIGHT</text>
        <path d="M1793 873l-6-22" stroke="#8cf48c" strokeWidth="2" />
        <path d="M1785 844l4 8-5 1z" fill="#7cf07c" />
        <path d="M1793 873l-22 6" stroke="#8c8cf8" strokeWidth="2" />
        <path d="M1765 881l8-4 1 4z" fill="#7c7cf4" />
        <path d="M1796 873h6" stroke="#f88c8c" strokeWidth="2" />
        <path d="M1806 873l-5 2v-4z" fill="#f47c7c" />
        <path d="M1760 877l8 8M1768 876l-7 10M1764 876v10" stroke="#777" strokeDasharray="2 1" />
        <circle cx="1793" cy="873" r="3" fill="#e0d020" stroke="#7c8010" strokeWidth="0.6" />
    </svg>
);

/* ---------- model tree ---------- */

const PlaneIcon = () => <Svg className="w-[18px] h-4"><path d="M0 2h16v12H0z" fill="#eef4fb" stroke="#6484c0" /><path d="M1 9h7v4" stroke="#6484c0" /></Svg>;
const BodyIcon = () => <Svg className="w-[18px] h-4"><path d="M1 1h9v9H1z" fill="#cbbce4" stroke="#9c8cc4" /><path d="M6 6h4v4h5v5H6z" fill="#5888d8" stroke="#2048a0" /></Svg>;
const SketchIcon = () => <Svg className="w-[18px] h-4"><path d="M1 1h5v5H1zM1 10h5v5H1zM9 10h6v5H9z" stroke="#1878c8" strokeWidth="1.5" /><path d="M7 10l6-9 2 2-6 8z" fill="#f0c020" stroke="#7c5808" strokeWidth="0.6" /><path d="M13 0l3 2-1 2-3-2z" fill="#e02020" /></Svg>;

type Node = { id: string; label: string; icon: ReactNode; level: string; expand?: "+" | "-"; check?: boolean; bold?: boolean; muted?: boolean };

const L1 = "pl-[20px]";
const L2 = "pl-[49px]";

const nodes: Node[] = [
    {
        id: "base", label: "Base", level: L1, check: true,
        icon: <Svg className="w-[18px] h-4"><path d="M2 1v13h13M3 13l7-7" stroke="#1c60a8" strokeWidth="1.5" /><path d="M5 1h3M6 1v3M10 5l3 3M13 5l-3 3" stroke="#a01880" /><path d="M0 3l2-3 2 3zM13 12l3 2-3 2z" fill="#1c60a8" /></Svg>,
    },
    {
        id: "mat", label: "材料 (无)", level: L1,
        icon: <Svg className="w-[18px] h-4"><path d="M1 1h14v14H1z" fill="#f0f8ff" stroke="#0c60a0" strokeWidth="1.5" /><path d="M3 3h4v4H3z" fill="#e88838" /><path d="M3 9h4v4H3z" fill="#3888c0" /><path d="M9 5h5M9 11h5" stroke="#204868" strokeWidth="1.5" /></Svg>,
    },
    { id: "ref", label: "基本参考平面", level: L1, expand: "-", check: false, muted: true, icon: <PlaneIcon /> },
    { id: "xy", label: "俯视图(XY)", level: L2, check: false, muted: true, icon: <PlaneIcon /> },
    { id: "yz", label: "右视图(YZ)", level: L2, check: false, muted: true, icon: <PlaneIcon /> },
    { id: "xz", label: "前视图(XZ)", level: L2, check: false, muted: true, icon: <PlaneIcon /> },
    { id: "bodies", label: "设计体", level: L1, expand: "-", check: true, icon: <BodyIcon /> },
    {
        id: "body3", label: "设计体_3", level: L2, check: true,
        icon: <Svg className="w-[18px] h-4"><path d="M4 1h6v4l5 3v6H6z" fill="#5888d8" stroke="#2048a0" /><path d="M1 6h5v5H1zM1 11h5v4H1zM6 11h5v4H6z" fill="#f8c030" stroke="#7c4c08" /></Svg>,
    },
    { id: "sync", label: "快速建模", level: L1, expand: "-", icon: null },
    {
        id: "features", label: "特征", level: L2, expand: "-", bold: true,
        icon: <Svg className="w-[18px] h-4"><path d="M1 1h9v9H1z" fill="#e4f4ff" stroke="#1868b8" strokeWidth="1.5" /><path d="M6 5h9v9H6z" fill="#3c8cdc" stroke="#104c94" strokeWidth="1.5" /></Svg>,
    },
    {
        id: "extrude", label: "拉伸 1", level: "pl-[72px]", bold: true,
        icon: <Svg className="w-[18px] h-4"><path d="M4 14c-3-6 0-8 11-8" stroke="#4c90c8" strokeWidth="5" /><path d="M2 9c1-3 4-4 8-4" stroke="#b8e0f8" strokeWidth="1.5" /><path d="M9 6l7-3v6z" fill="#203848" /><path d="M8 0v16" stroke="#f02020" strokeDasharray="3 1" /></Svg>,
    },
    {
        id: "section", label: "实时剖面", level: L2, expand: "+", check: true, bold: true,
        icon: <Svg className="w-[18px] h-[18px]"><circle cx="8" cy="8" r="7.5" fill="#68b8ec" stroke="#2878c0" /><circle cx="7" cy="7" r="5" stroke="#d8f4ff" /><circle cx="10" cy="9" r="3.5" fill="#a8dcf8" stroke="#1060c0" strokeWidth="1.5" /><circle cx="11" cy="11" r="1.5" fill="#10a810" /></Svg>,
    },
    { id: "sketches", label: "草图", level: L2, expand: "+", check: true, bold: true, icon: <SketchIcon /> },
    { id: "used", label: "使用的草图", level: L2, expand: "+", bold: true, icon: <SketchIcon /> },
];

function TreeCheck({ label, on }: { label: string; on: boolean }) {
    const [checked, setChecked] = useState(on);
    return (
        <label className="relative w-4 h-[14px] shrink-0">
            <input
                type="checkbox"
                aria-label={label}
                checked={checked}
                onChange={(e) => setChecked(e.target.checked)}
                className="block w-4 h-[14px] appearance-none border-2 border-[#3c6088] bg-white"
            />
            {checked && (
                <Svg className="absolute left-[2px] top-px w-3 h-3 pointer-events-none"><path d="M2 7l4 5 8-10" stroke="#0c3060" strokeWidth="4" /></Svg>
            )}
        </label>
    );
}

function TreeRow({ node }: { node: Node }) {
    const tone = node.muted ? "text-[#7c7c7c]" : "text-black";
    return (
        <li className={`h-5 flex items-center ${node.level}`}>
            <span className="w-5 shrink-0">
                {node.expand && (
                    <button aria-label={`展开 ${node.label}`} className="block w-[11px] h-[11px] border border-[#8098a8] bg-[#f0f0f0]">
                        <Svg className="w-[9px] h-[9px]" box={9}><path d={node.expand === "+" ? "M1 4.500h7M4.500 1v7" : "M1 4.500h7"} stroke="#000" /></Svg>
                    </button>
                )}
            </span>
            {node.id === "sync" ? (
                <button className="w-[229px] h-[18px] pl-[7px] pr-3 flex items-center gap-[2px] border border-[#f0a030] bg-gradient-to-b from-[#f4b23c] via-[#ffe48c] to-[#f8b420] text-[17px] leading-4 font-bold">
                    <Svg><path d="M3 1v9H0l5 6 3-5 3 5 5-6h-3V1h-3v9H6V1z" fill="#fff" stroke="#e8c070" strokeWidth="0.5" /></Svg>
                    {node.label}
                    <Svg className="ml-auto w-5 h-3" box={20}><path d="M-6 10L26 0v20z" fill="#fff" /></Svg>
                </button>
            ) : (
                <>
                    <span className="w-[23px] shrink-0 flex">{node.check !== undefined && <TreeCheck label={node.label} on={node.check} />}</span>
                    <button className={`h-[18px] pl-px pr-[7px] flex items-center gap-[6px] border border-[#a0b4c0] bg-gradient-to-r from-[#e4ecf2] to-[#fafcfc] leading-4 whitespace-nowrap ${tone} ${node.bold ? "text-[17px] font-bold" : "text-base"}`}>
                        {node.icon}
                        {node.label}
                    </button>
                </>
            )}
        </li>
    );
}

function ModelTree() {
    return (
        <div className="relative w-[313px]">
            <div className="h-[11px] flex justify-center pt-[3px] gap-[2px] border border-[#888] bg-gradient-to-b from-[#e8e8e8] to-[#c4c4c4]">
                {Array.from({ length: 10 }, (_, i) => <span key={i} className="w-[2px] h-[2px] bg-[#405880]" />)}
            </div>
            <ul className="pt-1">
                <li className="h-5 flex items-center pl-[6px]">
                    <button className="h-[18px] pl-[2px] pr-[7px] flex items-center border border-[#a0b4c0] bg-gradient-to-r from-[#e4ecf2] to-[#fafcfc] text-base leading-4">
                        <Svg><path d="M1 1h6v6h7v8H1z" fill="#5c9ce8" stroke="#102c80" strokeWidth="1.8" /></Svg>
                        <Svg className="w-4 h-4 ml-1 mr-2"><path d="M2 7V3c0-3 6-3 6 1v2" stroke="#8c5818" strokeWidth="1.5" /><path d="M4 6h11v9H4z" fill="#f8e0a0" stroke="#a86018" /><path d="M9 9h2v3H9z" fill="#111" /></Svg>
                        零件2
                    </button>
                </li>
                {nodes.map((n) => <TreeRow key={n.id} node={n} />)}
            </ul>
        </div>
    );
}

function Workspace() {
    return (
        <div className="flex-1 min-h-0 flex border border-[#3c3c3c] border-r-2 bg-gradient-to-b from-[#c6c2c6] to-[#a0a0a0] pt-1 pl-[6px] pr-1 pb-1">
            <section aria-label="零件1" className="flex-[957] min-w-0 flex flex-col rounded-t-md border border-[#404048] bg-[#d6e3f1] pl-[7px] pr-[3px] pb-2">
                <header className="h-[38px] shrink-0 -ml-[7px] -mr-[3px] pt-[2px] pl-[9px] pr-[5px] flex items-center gap-1 rounded-t-md bg-gradient-to-b from-[#bccbdc] to-[#d6e3f1] text-[15px] leading-5 text-[#8c98a8]">
                    <PartIcon />
                    零件1
                    <WindowButtons />
                </header>
                <div className="relative flex-1 overflow-hidden bg-[#fafcfb]"><SketchDrawing /></div>
            </section>
            <section aria-label="零件2" className="flex-[918] min-w-0 flex flex-col rounded-t-md border border-black bg-[#b9d1ea] px-[7px] pb-[7px] shadow-[inset_-1px_-1px_0_#20d0e8]">
                <header className="h-[38px] shrink-0 -mx-[7px] pt-[2px] pl-[9px] pr-[11px] flex items-center gap-1 rounded-t-md bg-gradient-to-b from-[#98b2d2] to-[#b9d1ea] text-[15px] leading-5 text-black">
                    <PartIcon />
                    零件2
                    <WindowButtons active />
                </header>
                <div className="relative flex-1 overflow-hidden bg-[#fafcfb]">
                    <SolidDrawing />
                    <ModelTree />
                </div>
            </section>
        </div>
    );
}

/* ---------- side and bottom bars ---------- */

const sideIcons: { label: string; icon: ReactNode }[] = [
    { label: "零件族", icon: <g fill="#7cc4fc" stroke="#143c80" strokeWidth="1.5"><path d="M10 2h8v7h5v8H10z" /><path d="M5 8h6v4h5v7H5z" /><path d="M1 13h5v3h4v6H1z" /></g> },
    { label: "帮助", icon: <><path d="M0 3h6l2 2h16v17H0z" fill="#f4f4f4" /><path d="M8 10c0-5 8-5 8 0 0 3-4 3-4 6M12 18v3" stroke="#8c8c8c" strokeWidth="2.5" /></> },
    { label: "传感器", icon: <><path d="M0 2h24v20H0z" fill="#184c90" /><path d="M2 3h5v9H2z" fill="#d84828" /><path d="M7 3h4v9H7z" fill="#f0ece0" /><path d="M11 3h4v9h-4z" fill="#30b040" /><path d="M15 3h3v9h-3z" fill="#f0ece0" /><path d="M18 3h4v9h-4z" fill="#d06030" /><path d="M1 21c1-15 21-15 22 0z" fill="#f0f8ff" /><path d="M5 13l7 8" stroke="#d81818" strokeWidth="2" /></> },
    { label: "样式", icon: <><path d="M0 2h24v20H0z" fill="#f2f2f2" stroke="#999" /><circle cx="7" cy="8" r="2.5" fill="#aaa" stroke="#666" /><circle cx="16" cy="8" r="2.5" fill="#ccc" stroke="#999" /><circle cx="7" cy="16" r="2.5" fill="#ccc" stroke="#999" /><circle cx="16" cy="16" r="2.5" fill="#bbb" stroke="#777" /></> },
    { label: "仿真", icon: <><path d="M3 3h18v18H3z" fill="#6c44b0" /><path d="M3 4c10 0 16 7 16 17H3z" fill="#6890e0" /><path d="M3 8c7 0 12 5 12 13H3z" fill="#80d0e8" /><path d="M3 11c6 0 9 4 9 10H3z" fill="#f8f020" /><path d="M3 15c4 0 6 2 6 6H3z" fill="#e01010" /><path d="M3 3h18v18H3z" stroke="#183c80" strokeWidth="1.5" /></> },
    { label: "测量", icon: <><path d="M5 18L17 6" stroke="#c89400" strokeWidth="4" /><circle cx="16" cy="7" r="5" fill="#f8d040" stroke="#c89400" strokeWidth="1.5" /><circle cx="16" cy="7" r="2.5" fill="#fff" /><circle cx="5" cy="19" r="3.5" fill="#f8d040" stroke="#c89400" /></> },
    { label: "图库", icon: <><path d="M4 6h19v15H4z" fill="#e8f4ff" stroke="#143c80" strokeWidth="1.5" /><path d="M1 3h18v14H1z" fill="#fff" stroke="#143c80" strokeWidth="1.5" /><path d="M4 10l5-5" stroke="#d82828" strokeWidth="1.5" /><circle cx="11" cy="12" r="3" stroke="#189828" strokeWidth="1.5" /><path d="M13 5h4v4h-4z" stroke="#48a0e0" /></> },
    { label: "关系", icon: <><path d="M5 5v14h14M6 18l10-11" stroke="#8c8c8c" strokeDasharray="2 2" /><path d="M3 3h4v4H3zM15 5h5v4h-5zM3 16h5v5H3zM19 17h4v4h-4z" fill="#d0d0d0" /></> },
];

function SideBar() {
    return (
        <aside className="w-[30px] shrink-0 pt-[2px] pl-px flex flex-col items-center bg-[#717171]">
            {sideIcons.map((s) => (
                <button key={s.label} aria-label={s.label} className="h-[41px] flex items-center">
                    <Svg className="w-6 h-6" box={24}>{s.icon}</Svg>
                </button>
            ))}
            <button className="w-[28px] h-36 mt-1 ml-px pt-[5px] flex flex-col items-center gap-1 rounded-l-sm border border-r-0 border-[#505050] bg-[#cbcbcb]">
                <Svg className="w-6 h-6" box={24}><path d="M1 1h16v19H1z" fill="#78b0ec" stroke="#143c80" strokeWidth="1.5" /><path d="M5 1v19" stroke="#143c80" /><path d="M11 9h12v13H11z" fill="#68c0f8" stroke="#143c80" strokeWidth="1.5" /><path d="M14 13h6v5h-6z" fill="#e8f4ff" stroke="#143c80" /></Svg>
                <span className="text-[15px] leading-5 text-black [writing-mode:vertical-rl] [text-orientation:sideways]">特征库</span>
            </button>
        </aside>
    );
}

function PromptBar() {
    return (
        <div className="mt-[3px] border-t-[5px] border-[#525252] pb-px">
            <div className="h-7 flex items-center bg-[#7d7d7d] text-white">
                <label htmlFor="prompt" className="w-[88px] h-full pl-[6px] flex items-center gap-[6px] text-[15px] leading-5 font-bold">
                    <Svg className="w-[25px] h-[25px]" box={25}><path d="M1 8h23v10H1z" fill="#fff" stroke="#1c4c94" strokeWidth="1.5" /><path d="M1 8h23v3H1z" fill="#3c78c8" /><path d="M4 14h4M10 14h5M17 14h4" stroke="#7090b8" strokeWidth="3" strokeDasharray="2 1" /></Svg>
                    提示条
                </label>
                <input
                    id="prompt"
                    readOnly
                    value="选择几何元素，单击“区域”以进行拉伸或旋转，或单击“实体”命令以创建 3D 特征。"
                    className="flex-1 min-w-0 h-full pl-[2px] border-t border-[#aaa] bg-white text-[17px] text-black outline-none"
                />
                <div className="w-5 h-full flex flex-col items-center justify-center gap-[3px] bg-[#f0f0f0] border-t border-[#aaa] mr-px">
                    <button aria-label="向上"><Svg className="w-[10px] h-[10px] block" box={10}><path d="M2 6l3-4 3 4" stroke="#555" strokeWidth="2" /></Svg></button>
                    <button aria-label="向下"><Svg className="w-[10px] h-[10px] block" box={10}><path d="M2 4l3 4 3-4" stroke="#555" strokeWidth="2" /></Svg></button>
                </div>
                <div className="w-[126px] h-full pl-2 flex items-center font-[Liberation_Serif]">
                    <button aria-label="增大字体" className="w-[21px] flex text-xl leading-6">A<span className="mt-1 w-0 h-0 border-x-2 border-x-transparent border-b-4 border-b-white" /></button>
                    <button aria-label="减小字体" className="w-5 flex justify-center text-sm leading-6 pt-1">A<span className="mt-px w-0 h-0 border-x-2 border-x-transparent border-t-4 border-t-white" /></button>
                    <button aria-label="折叠" className="w-5 flex justify-center"><Svg className="w-3 h-3"><path d="M2 8l6-6 6 6M2 15l6-6 6 6" stroke="#fff" strokeWidth="2" /></Svg></button>
                    <button aria-label="选项" className="w-5 flex justify-center"><Svg className="w-3 h-3"><path d="M1 2h14" stroke="#fff" strokeWidth="3" /><path d="M2 7h12l-6 7z" fill="#fff" /></Svg></button>
                    <button aria-label="固定" className="w-5 flex justify-center"><Svg className="w-[14px] h-[14px]"><path d="M5 1h6v8H5zM2 9h12M8 9v6" stroke="#fff" strokeWidth="1.8" /></Svg></button>
                    <button aria-label="关闭" className="w-5 flex justify-center"><Svg className="w-3 h-3"><path d="M2 2l12 12M14 2L2 14" stroke="#fff" strokeWidth="2.5" /></Svg></button>
                </div>
            </div>
        </div>
    );
}

const viewTools: { label: string; icon: ReactNode }[] = [
    { label: "转到", icon: <path d="M1 18C1 8 6 6 12 6V2l7 7-7 7v-4C8 12 4 13 1 18z" fill="#f0f8ff" stroke="#5890c8" strokeWidth="0.6" /> },
    { label: "区域缩放", icon: <><path d="M1 1h18v17H1z" fill="#e0f0ff" stroke="#2868c8" strokeWidth="1.5" /><path d="M1 2h18" stroke="#1858c0" strokeWidth="3" /><circle cx="10" cy="10" r="4.5" fill="#90c8f8" stroke="#285c98" strokeWidth="1.5" /><path d="M13 14l5 5" stroke="#d07820" strokeWidth="2.5" /></> },
    { label: "缩放", icon: <><circle cx="8" cy="8" r="6.5" fill="#a8d0f4" stroke="#4878a8" strokeWidth="1.5" /><path d="M8 4v6M6 6l2-2 2 2M5 11h6" stroke="#102040" strokeWidth="1.5" /><path d="M13 13l6 6" stroke="#d07820" strokeWidth="3" /></> },
    { label: "适合", icon: <><path d="M1 1h18v17H1z" fill="#e0f0ff" stroke="#2868c8" strokeWidth="1.5" /><path d="M1 2h18" stroke="#1858c0" strokeWidth="3" /><path d="M5 6l10 9M15 6L5 15M5 9V6h3M12 6h3v3M5 12v3h3M12 15h3v-3" stroke="#183868" strokeWidth="1.5" /></> },
    { label: "平移", icon: <><path d="M1 1h18v16H1z" fill="#e0f0ff" stroke="#2868c8" strokeWidth="1.5" /><path d="M1 2h18" stroke="#1858c0" strokeWidth="3" /><path d="M5 9c4-6 12-4 13 2l1 8h-6l-3-5-4-1z" fill="#c8b8a0" stroke="#483c30" /></> },
    { label: "旋转", icon: <><circle cx="10" cy="10" r="5" fill="#b0e0ff" /><path d="M3 13c-1-7 4-11 10-9M17 7c1 7-4 11-10 9" stroke="#28c020" strokeWidth="3" /><path d="M12 0l6 5-6 4zM8 20l-6-5 6-4z" fill="#28c020" /></> },
    { label: "草图视图", icon: <><path d="M0 9l7-7v4l5-4v5l6 3-6 3v5H6v-4z" fill="#8cccf4" stroke="#2868b8" /><path d="M15 13l4 6h-8z" fill="#20b820" /></> },
    { label: "视图方向", icon: <><path d="M4 1h15v14H4z" fill="#a8d8f8" stroke="#3888c8" /><path d="M1 6h12v13H1z" fill="#f8e818" stroke="#988c10" /><path d="M3 8h6L7 10l4 5-2 2-4-5-2 2z" fill="#109818" /></> },
    { label: "视图样式", icon: <><path d="M1 1h12v12H1z" stroke="#90c0f0" strokeWidth="1.5" /><path d="M7 7h12v12H7z" fill="#f0b020" stroke="#a87008" /></> },
];

function StatusBar() {
    return (
        <footer className="h-[26px] shrink-0 flex items-center border-t border-[#2c2c2c] bg-gradient-to-b from-[#505050] to-[#2c2c2c] text-white">
            <span className="ml-auto w-[2px] h-[22px] bg-[#e8e8e8]" />
            <p className="w-[331px] text-center text-[15px] leading-6">选择了 0 项</p>
            <span className="w-[2px] h-[22px] bg-[#e8e8e8]" />
            <input aria-label="查找命令" placeholder="查找命令" className="w-[177px] h-[25px] ml-6 px-[3px] bg-white text-[15px] leading-6 text-black placeholder:text-[#b4b4b4] outline-none" />
            <div className="flex">
                {viewTools.map((t) => (
                    <button key={t.label} aria-label={t.label} className="w-7 flex justify-center">
                        <Svg className="w-5 h-5" box={20}>{t.icon}</Svg>
                    </button>
                ))}
            </div>
            <span className="w-px h-[23px] mx-px bg-[#e8e8e8]" />
            <button aria-label="缩小"><Svg className="w-5 h-5" box={20}><circle cx="10" cy="10" r="9" fill="#d4e4f8" stroke="#6c88b0" strokeWidth="1.5" /><path d="M5 10h10" stroke="#111" strokeWidth="2.5" /></Svg></button>
            <input
                type="range"
                aria-label="缩放级别"
                defaultValue="54"
                className="w-[148px] h-5 appearance-none bg-transparent [&::-webkit-slider-runnable-track]:h-[2px] [&::-webkit-slider-runnable-track]:bg-[#e8e8e8] [&::-webkit-slider-thumb]:appearance-none [&::-webkit-slider-thumb]:w-3 [&::-webkit-slider-thumb]:h-4 [&::-webkit-slider-thumb]:-mt-[10px] [&::-webkit-slider-thumb]:border-2 [&::-webkit-slider-thumb]:border-[#a8c4e4] [&::-webkit-slider-thumb]:bg-[#4c6890] [&::-webkit-slider-thumb]:rounded-b-md"
            />
            <button aria-label="放大"><Svg className="w-5 h-5" box={20}><circle cx="10" cy="10" r="9" fill="#d4e4f8" stroke="#6c88b0" strokeWidth="1.5" /><path d="M5 10h10M10 5v10" stroke="#111" strokeWidth="2.5" /></Svg></button>
            <span className="w-[2px] h-[23px] ml-[2px] bg-[#e8e8e8]" />
            <button aria-label="视频" className="w-7 flex justify-center"><Svg className="w-5 h-5" box={20}><rect x="1" y="4" width="18" height="12" rx="2" fill="#f01010" /><path d="M8 7l5 3-5 3z" fill="#fff" /></Svg></button>
            <span className="w-[2px] h-[23px] bg-[#e8e8e8]" />
            <button aria-label="录制" className="w-[29px] flex justify-center"><Svg className="w-5 h-5" box={20}><circle cx="10" cy="10" r="8.5" fill="#d81818" stroke="#b0b0b0" strokeWidth="1.8" /></Svg></button>
            <span className="w-[2px] h-[23px] bg-[#e8e8e8]" />
            <button aria-label="上传" className="w-7 pl-1 flex justify-center"><Svg className="w-5 h-5" box={20}><path d="M10 1l7 8h-4v5H7V9H3z" fill="#48b828" stroke="#287010" /><path d="M3 15h14v4H3z" fill="#e8e8e8" /></Svg></button>
        </footer>
    );
}

export default function App() {
    return (
        <div className="h-screen flex flex-col overflow-hidden bg-[#717171] font-['Noto_Sans','Noto_Sans_CJK_SC',sans-serif]">
            <Gradients />
            <header className="relative">
                <TitleBar />
                <TabBar />
                <div className="absolute left-[10px] top-[9px] w-[38px] h-[38px] flex items-center justify-center rounded border-2 border-[#1c64c8] bg-white">
                    <Svg className="w-8 h-8" box={32}>
                        <path d="M31 2C18 1 7 5 3 15c-4 10 2 16 10 16 9 0 14-6 16-16H15l-2 5h8c-2 3-4 5-7 5-4 0-6-3-4-8C13 9 20 7 29 7z" fill="url(#logo)" />
                    </Svg>
                </div>
            </header>
            <Ribbon />
            <QuickBar />
            <div className="flex-1 min-h-0 flex">
                <main className="flex-1 min-w-0 flex flex-col">
                    <DocTabs />
                    <Workspace />
                    <PromptBar />
                </main>
                <SideBar />
            </div>
            <StatusBar />
        </div>
    );
}
